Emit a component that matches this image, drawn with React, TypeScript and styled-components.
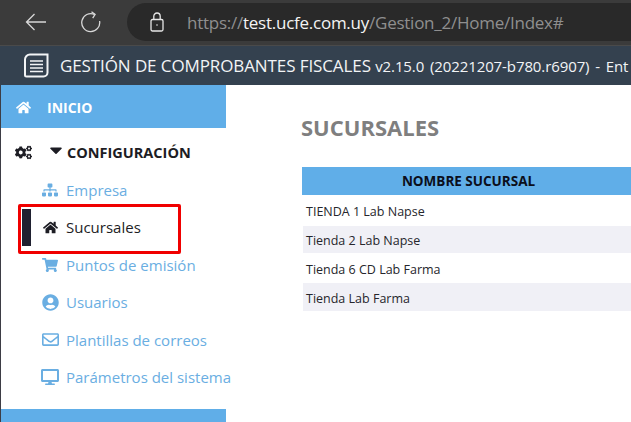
import styled, { createGlobalStyle } from "styled-components";
import { ReactNode } from "react";
import {
  FaCaretDown,
  FaCogs,
  FaDesktop,
  FaHome,
  FaRegEnvelope,
  FaShoppingCart,
  FaSitemap,
  FaUserCircle,
} from "react-icons/fa";

const GlobalStyle = createGlobalStyle`
  html, body {
    margin: 0;
    padding: 0;
    height: 100%;
    overflow: hidden;
    background: #fff;
    font-family: "Open Sans", "Liberation Sans", sans-serif;
  }
`;

const menuItems: { label: string; icon: ReactNode; active?: boolean }[] = [
  { label: "Empresa", icon: <FaSitemap size={16} /> },
  { label: "Sucursales", icon: <FaHome size={15} />, active: true },
  { label: "Puntos de emisión", icon: <FaShoppingCart size={16} /> },
  { label: "Usuarios", icon: <FaUserCircle size={17} /> },
  { label: "Plantillas de correos", icon: <FaRegEnvelope size={17} /> },
  { label: "Parámetros del sistema", icon: <FaDesktop size={18} /> },
];

const branches = [
  "TIENDA 1 Lab Napse",
  "Tienda 2 Lab Napse",
  "Tienda 6 CD Lab Farma",
  "Tienda Lab Farma",
];

export default function App() {
  return (
    <Page>
      <GlobalStyle />
      <BrowserBar>
        <NavButton $width={55}>
          <svg width="21" height="18" viewBox="0 0 21 18" fill="none" stroke="#d8d8d8" strokeWidth="1.3">
            <path d="M21 9H1.5M9.5 1L1.5 9l8 8" />
          </svg>
        </NavButton>
        <NavButton $width={47}>
          <svg width="21" height="22" viewBox="0 0 21 22" fill="none" stroke="#d8d8d8" strokeWidth="1.3">
            <path d="M14.5 3.4A9 9 0 1 0 19.6 10" />
            <path d="M11.5 0.8l3.6 2.6-2.4 3.8" />
          </svg>
        </NavButton>
        <AddressBar>
          <svg width="14" height="20" viewBox="0 0 14 20" fill="none" stroke="#e6e6e6" strokeWidth="1.3">
            <rect x="1" y="7.5" width="12" height="11.5" rx="1.5" />
            <path d="M3.8 7.5V4.2a3.2 3.2 0 0 1 6.4 0v3.3" />
            <circle cx="7" cy="13" r="0.8" fill="#e6e6e6" stroke="none" />
          </svg>
          <Url>
            https://<UrlHost>test.ucfe.com.uy</UrlHost>/Gestion_2/Home/Index#
          </Url>
        </AddressBar>
      </BrowserBar>

      <TitleBar>
        <svg width="25" height="25" viewBox="0 0 25 25" fill="none" stroke="#f2f4f6">
          <path strokeWidth="2" d="M6 1.5h17.5v18a4 4 0 0 1-4 4H2.5a1.5 1.5 0 0 1-1.5-1.5V6.5a5 5 0 0 1 5-5z" />
          <path strokeWidth="1.6" d="M6 8h13M6 11.5h13M6 15h13M6 18.5h13" />
        </svg>
        <AppTitle>
          GESTIÓN DE COMPROBANTES FISCALES <Version>v2.15.0 (20221207-b780.r6907) - Ent</Version>
        </AppTitle>
      </TitleBar>

      <Body>
        <Sidebar>
          <HomeItem>
            <FaHome size={15} />
            <span>INICIO</span>
          </HomeItem>
          <SectionItem>
            <FaCogs size={17} />
            <FaCaretDown size={20} />
            <span>CONFIGURACIÓN</span>
          </SectionItem>
          <Menu>
            {menuItems.map((item) => (
              <MenuItem key={item.label} $active={item.active}>
                <MenuIcon>{item.icon}</MenuIcon>
                {item.label}
                {item.active && <Highlight />}
              </MenuItem>
            ))}
          </Menu>
          <NextBlock />
        </Sidebar>

        <Content>
          <Heading>SUCURSALES</Heading>
          <Table>
            <thead>
              <tr>
                <HeadCell>NOMBRE SUCURSAL</HeadCell>
              </tr>
            </thead>
            <tbody>
              {branches.map((name, i) => (
                <Row key={name} $height={[31, 27, 30, 28][i]}>
                  <Cell $shaded={i % 2 === 1}>{name}</Cell>
                </Row>
              ))}
            </tbody>
          </Table>
        </Content>
      </Body>
    </Page>
  );
}

const Page = styled.div`
  width: 631px;
  height: 422px;
  display: flex;
  flex-direction: column;
  overflow: hidden;
  background: #fff;
`;

const BrowserBar = styled.div`
  height: 46px;
  flex: none;
  box-sizing: border-box;
  display: flex;
  align-items: center;
  padding: 0 0 1px 25px;
  background: #3b3b3b;
  border-bottom: 1px solid #4a4a4a;
`;

const NavButton = styled.div<{ $width: number }>`
  width: ${(p) => p.$width}px;
  flex: none;
  display: flex;
  align-items: center;
`;

const AddressBar = styled.div`
  flex: 1;
  height: 38px;
  margin-right: -40px;
  padding-left: 23px;
  display: flex;
  align-items: center;
  gap: 23px;
  border-radius: 19px;
  background: #292929;
`;

const Url = styled.span`
  font-size: 17px;
  letter-spacing: -0.25px;
  color: #8f8f8f;
  white-space: nowrap;
`;

const UrlHost = styled.span`
  color: #f4f4f4;
`;

const TitleBar = styled.div`
  height: 39px;
  flex: none;
  box-sizing: border-box;
  display: flex;
  align-items: center;
  gap: 11px;
  padding-left: 24px;
  background: #34414f;
  overflow: hidden;

  svg {
    flex: none;
  }
`;

const AppTitle = styled.div`
  font-size: 17px;
  color: #f2f4f6;
  white-space: nowrap;
  letter-spacing: -0.1px;
`;

const Version = styled.span`
  font-size: 15px;
  letter-spacing: -0.1px;
  word-spacing: 2px;
`;

const Body = styled.div`
  flex: 1;
  display: flex;
  min-height: 0;
  border-left: 1px solid #3d3d45;
`;

const Sidebar = styled.nav`
  width: 225px;
  flex: none;
  display: flex;
  flex-direction: column;
`;

const HomeItem = styled.div`
  height: 43px;
  flex: none;
  display: flex;
  align-items: center;
  gap: 16px;
  padding: 2px 0 0 15px;
  box-sizing: border-box;
  background: #60aee8;
  color: #fff;
  font-size: 14px;
  font-weight: 700;
`;

const SectionItem = styled.div`
  height: 48px;
  flex: none;
  display: flex;
  align-items: center;
  padding-left: 14px;
  color: #1d1d24;
  font-size: 14.5px;
  font-weight: 700;

  svg:nth-child(2) {
    margin: -4px 1px 0 14px;
  }
`;

const Menu = styled.div`
  display: flex;
  flex-direction: column;
  margin-top: -5px;
`;

const MenuItem = styled.div<{ $active?: boolean }>`
  position: relative;
  height: 37.5px;
  display: flex;
  align-items: center;
  padding-left: 39px;
  font-size: 15px;
  white-space: nowrap;
  color: ${(p) => (p.$active ? "#1d1d24" : "#6aaee2")};
`;

const MenuIcon = styled.span`
  width: 26px;
  flex: none;
  display: flex;
  justify-content: center;
  padding-right: 6px;
  box-sizing: border-box;
`;

const Highlight = styled.span`
  position: absolute;
  left: 17px;
  top: -5px;
  width: 163px;
  height: 50px;
  box-sizing: border-box;
  border: 3px solid #f00000;
  border-radius: 2px;
  pointer-events: none;

  &::before {
    content: "";
    position: absolute;
    left: 1px;
    top: 2px;
    width: 9px;
    height: 37px;
    background: #1f2030;
  }
`;

const NextBlock = styled.div`
  flex: 1;
  margin-top: 13px;
  background: #60aee8;
`;

const Content = styled.main`
  flex: 1;
  min-width: 0;
  padding: 26px 0 0 75px;
  box-sizing: border-box;
`;

const Heading = styled.h1`
  margin: 0 0 27px;
  height: 29px;
  line-height: 32px;
  font-size: 22px;
  font-weight: 700;
  color: #7f7f7f;
`;

const Table = styled.table`
  width: 100%;
  border-collapse: collapse;
  table-layout: fixed;
`;

const HeadCell = styled.th`
  height: 28px;
  padding: 0 0 0 4px;
  background: #60aee8;
  color: #0b0f1c;
  font-size: 13.5px;
  font-weight: 700;
  text-align: center;
`;

const Row = styled.tr<{ $height: number }>`
  height: ${(p) => p.$height}px;
`;

const Cell = styled.td<{ $shaded: boolean }>`
  padding: 2px 0 0 3px;
  font-size: 12.5px;
  color: #26262c;
  background: ${(p) => (p.$shaded ? "#f0f0f6" : "#fff")};
  background-clip: padding-box;
  border-left: 2px solid #fff;
`;
